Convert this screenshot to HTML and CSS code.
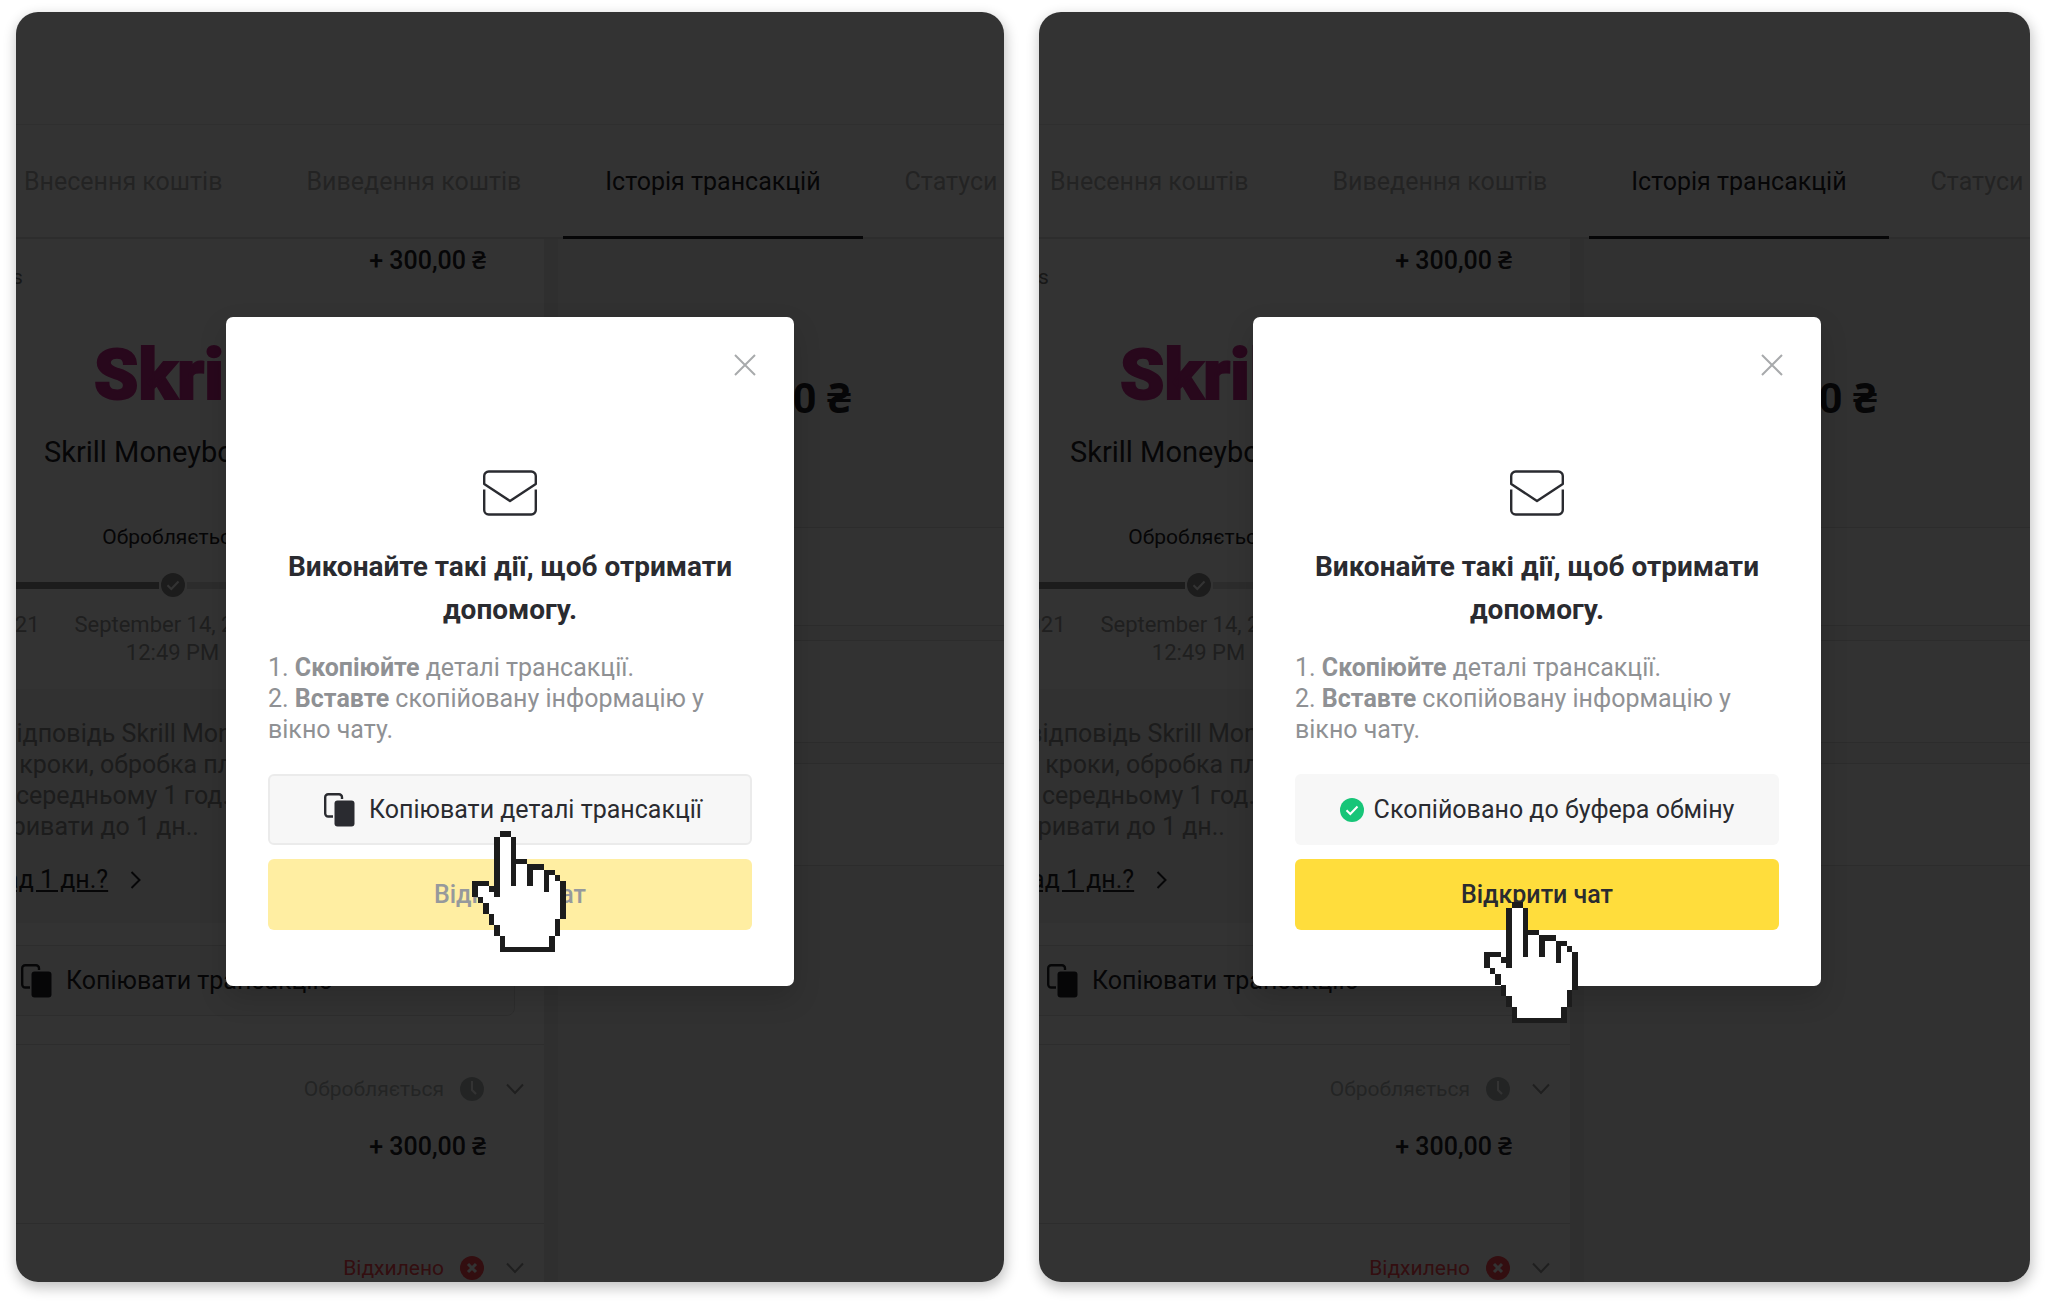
FILE: index.html
```
<!DOCTYPE html>
<html lang="uk">
<head>
    <meta charset="UTF-8">
    <meta name="viewport" content="width=device-width, initial-scale=1.0">
    <title>Історія трансакцій</title>
    <link rel="stylesheet" href="styles.css">
</head>
<body>
    <!-- shared icons -->
    <svg class="sprite" aria-hidden="true">
        <symbol id="icon-copy" viewBox="0 0 31 34">
            <path d="M9 23.500H4.200a3 3 0 0 1-3-3V4.200a3 3 0 0 1 3-3H15a3 3 0 0 1 3 3V6" fill="none" stroke="currentColor" stroke-width="2.400"/>
            <rect x="10.500" y="7.500" width="20" height="26" rx="3" fill="currentColor"/>
        </symbol>
        <symbol id="icon-check" viewBox="0 0 24 24">
            <circle cx="12" cy="12" r="12" fill="currentColor"/>
            <path d="M6.500 12.300l3.800 3.700 7.200-7.500" fill="none" stroke="#fff" stroke-width="2"/>
        </symbol>
        <symbol id="icon-clock" viewBox="0 0 24 24">
            <circle cx="12" cy="12" r="12" fill="currentColor"/>
            <path d="M12 4v9l4 4" fill="none" stroke="#fff" stroke-width="2"/>
        </symbol>
        <symbol id="icon-cross" viewBox="0 0 24 24">
            <circle cx="12" cy="12" r="12" fill="currentColor"/>
            <path d="M8 8l8 8M16 8l-8 8" stroke="#fff" stroke-width="3"/>
        </symbol>
        <symbol id="icon-down" viewBox="0 0 18 12">
            <path d="M1 1.500l8 8.500 8-8.500" fill="none" stroke="currentColor" stroke-width="2"/>
        </symbol>
        <symbol id="icon-right" viewBox="0 0 12 18">
            <path d="M1.500 1l8 8-8 8" fill="none" stroke="currentColor" stroke-width="2"/>
        </symbol>
        <symbol id="icon-close" viewBox="0 0 22 22">
            <path d="M1 1l20 20M21 1L1 21" stroke="currentColor" stroke-width="2"/>
        </symbol>
        <symbol id="icon-mail" viewBox="0 0 54 46">
            <path d="M1.200 14V6a4.500 4.500 0 0 1 4.500-4.500h42.600A4.500 4.500 0 0 1 52.800 6v8L27 31z" fill="none" stroke="currentColor" stroke-width="2.400" stroke-linejoin="round"/>
            <path d="M1.200 19.500V40a4.500 4.500 0 0 0 4.500 4.500h42.600A4.500 4.500 0 0 0 52.800 40V19.500" fill="none" stroke="currentColor" stroke-width="2.400"/>
        </symbol>
        <symbol id="icon-hand" viewBox="0 0 17 22" shape-rendering="crispEdges">
            <path fill="#fff" d="M5 1h2v5h3v1h3v1h2v1h1v7h-1v3h-1v2H6v-2H5v-2H4v-2H3v-2H2v-1H1v-2h2v1h2z"/>
            <path fill="#1c1c1c" d="M5 0h2v1H5zM4 1h1v11H4zM7 1h1v9H7zM8 5h2v1H8zM10 6h3v1h-2v3h-1zM13 7h2v1h-1v3h-1zM15 8h1v1h-1zM16 9h1v7h-1zM15 16h1v3h-1zM14 19h1v3H5v-3h1v2h8zM4 17h1v2H4zM3 15h1v2H3zM2 13h1v2H2zM1 12h1v1H1zM0 9h3v1H1v2H0zM3 10h1v1H3z"/>
        </symbol>
    </svg>

    <section class="panel">
        <div class="page">
            <div class="topbar"></div>
            <nav class="tabs">
                <a href="#">Внесення коштів</a>
                <a href="#">Виведення коштів</a>
                <a href="#" class="active">Історія трансакцій</a>
                <a href="#">Статуси</a>
            </nav>
            <div class="columns">
                <div class="history">
                    <div class="summary">
                        <span class="account">s</span>
                        <span class="amount">+ 300,00 ₴</span>
                    </div>
                    <div class="logo">Skrill</div>
                    <div class="method">Skrill Moneybookers</div>
                    <div class="steps">
                        <div class="step done">
                            <div class="label"></div>
                            <div class="track"><svg><use href="#icon-check"/></svg></div>
                            <div class="date">September 14, 2021</div>
                        </div>
                        <div class="step">
                            <div class="label">Обробляється</div>
                            <div class="track"><svg><use href="#icon-check"/></svg></div>
                            <div class="date">September 14, 2021<br>12:49 PM</div>
                        </div>
                    </div>
                    <div class="hint">
                        <p>на відповідь Skrill Moneybookers<br>такі кроки, обробка платежу<br>або середньому 1 год.<br>та тривати до 1 дн..</p>
                        <a href="#"><span>понад 1 дн.?</span> <svg><use href="#icon-right"/></svg></a>
                    </div>
                    <button class="copy"><svg><use href="#icon-copy"/></svg>Копіювати трансакцію</button>
                    <div class="row">
                        <div class="status">Обробляється <svg class="badge"><use href="#icon-clock"/></svg><svg class="arrow"><use href="#icon-down"/></svg></div>
                        <div class="amount">+ 300,00 ₴</div>
                    </div>
                    <div class="row">
                        <div class="status rejected">Відхилено <svg class="badge"><use href="#icon-cross"/></svg><svg class="arrow"><use href="#icon-down"/></svg></div>
                    </div>
                </div>
                <div class="details">
                    <div class="total">+ 300,00 ₴</div>
                    <div class="card short"></div>
                    <div class="card"></div>
                    <div class="card"></div>
                </div>
            </div>
        </div>
        <div class="overlay">
            <div class="modal">
                <button class="close" aria-label="Закрити"><svg><use href="#icon-close"/></svg></button>
                <svg class="mail"><use href="#icon-mail"/></svg>
                <h2>Виконайте такі дії, щоб отримати допомогу.</h2>
                <p>1. <b>Скопіюйте</b> деталі трансакції.</p>
                <p>2. <b>Вставте</b> скопійовану інформацію у вікно чату.</p>
                <button class="btn btn-copy"><svg><use href="#icon-copy"/></svg>Копіювати деталі трансакції</button>
                <button class="btn btn-chat" disabled>Відкрити чат</button>
                <svg class="hand"><use href="#icon-hand"/></svg>
            </div>
        </div>
    </section>

    <section class="panel copied">
        <div class="page">
            <div class="topbar"></div>
            <nav class="tabs">
                <a href="#">Внесення коштів</a>
                <a href="#">Виведення коштів</a>
                <a href="#" class="active">Історія трансакцій</a>
                <a href="#">Статуси</a>
            </nav>
            <div class="columns">
                <div class="history">
                    <div class="summary">
                        <span class="account">s</span>
                        <span class="amount">+ 300,00 ₴</span>
                    </div>
                    <div class="logo">Skrill</div>
                    <div class="method">Skrill Moneybookers</div>
                    <div class="steps">
                        <div class="step done">
                            <div class="label"></div>
                            <div class="track"><svg><use href="#icon-check"/></svg></div>
                            <div class="date">September 14, 2021</div>
                        </div>
                        <div class="step">
                            <div class="label">Обробляється</div>
                            <div class="track"><svg><use href="#icon-check"/></svg></div>
                            <div class="date">September 14, 2021<br>12:49 PM</div>
                        </div>
                    </div>
                    <div class="hint">
                        <p>на відповідь Skrill Moneybookers<br>такі кроки, обробка платежу<br>або середньому 1 год.<br>та тривати до 1 дн..</p>
                        <a href="#"><span>понад 1 дн.?</span> <svg><use href="#icon-right"/></svg></a>
                    </div>
                    <button class="copy"><svg><use href="#icon-copy"/></svg>Копіювати трансакцію</button>
                    <div class="row">
                        <div class="status">Обробляється <svg class="badge"><use href="#icon-clock"/></svg><svg class="arrow"><use href="#icon-down"/></svg></div>
                        <div class="amount">+ 300,00 ₴</div>
                    </div>
                    <div class="row">
                        <div class="status rejected">Відхилено <svg class="badge"><use href="#icon-cross"/></svg><svg class="arrow"><use href="#icon-down"/></svg></div>
                    </div>
                </div>
                <div class="details">
                    <div class="total">+ 300,00 ₴</div>
                    <div class="card short"></div>
                    <div class="card"></div>
                    <div class="card"></div>
                </div>
            </div>
        </div>
        <div class="overlay">
            <div class="modal">
                <button class="close" aria-label="Закрити"><svg><use href="#icon-close"/></svg></button>
                <svg class="mail"><use href="#icon-mail"/></svg>
                <h2>Виконайте такі дії, щоб отримати допомогу.</h2>
                <p>1. <b>Скопіюйте</b> деталі трансакції.</p>
                <p>2. <b>Вставте</b> скопійовану інформацію у вікно чату.</p>
                <button class="btn btn-done"><svg><use href="#icon-check"/></svg>Скопійовано до буфера обміну</button>
                <button class="btn btn-chat">Відкрити чат</button>
                <svg class="hand"><use href="#icon-hand"/></svg>
            </div>
        </div>
    </section>
</body>
</html>
```

FILE: styles.css
```
* {
    box-sizing: border-box;
}
body {
    margin: 0;
    height: 100vh;
    padding: 12px 18px 23px 16px;
    display: flex;
    gap: 35px;
    background-color: white;
    font-family: Roboto, "Noto Sans", sans-serif;
    font-size: 25px;
    line-height: 31px;
    color: #1e2226;
}
a {
    color: inherit;
    text-decoration: none;
}
button {
    font: inherit;
    color: inherit;
    cursor: pointer;
}
svg {
    display: block;
    flex: none;
}
.sprite {
    position: absolute;
    width: 0;
    height: 0;
}
.panel {
    position: relative;
    flex: 1;
    min-width: 0;
    overflow: hidden;
    border-radius: 22px;
    background-color: white;
    box-shadow: 1px 5px 13px 1px rgba(0, 0, 0, 0.24);
}
.copied {
    padding-left: 3px;
}

/* page under the overlay */
.page {
    margin-left: -54px;
}
.topbar {
    height: 113px;
    border-bottom: 1px solid #ebebeb;
}
.tabs {
    display: flex;
    height: 114px;
    padding-left: 20px;
    border-bottom: 2px solid #e1e1e1;
    color: #b0b0b0;
}
.tabs a {
    flex: none;
    height: 114px;
    padding: 0 42px;
    line-height: 114px;
}
.tabs .active {
    color: #1e2226;
    border-bottom: 3px solid #1e2226;
}
.columns {
    display: flex;
    background-color: #ebebeb;
    gap: 14px;
}
.history {
    width: 582px;
    flex: none;
    background-color: white;
}
.summary {
    display: flex;
    justify-content: space-between;
    padding: 0 58px 0 50px;
}
.account {
    margin-top: 24px;
    font-size: 21px;
    line-height: 28px;
    color: #777;
}
.amount {
    font-weight: 500;
    line-height: 44px;
}
.logo {
    margin: 48px 0 23px 132px;
    font-size: 71px;
    font-weight: 900;
    line-height: 72px;
    color: #c8288c;
    -webkit-text-stroke: 2px #c8288c;
}
.method {
    padding-left: 82px;
    font-size: 29px;
    line-height: 36px;
}
.steps {
    display: flex;
    margin-left: -136px;
    padding: 53px 0 22px;
    font-size: 21px;
    line-height: 28px;
    text-align: center;
}
.step {
    width: 231px;
    flex: none;
}
.label {
    height: 28px;
}
.track {
    display: flex;
    align-items: center;
    gap: 2px;
    margin: 22px 0 14px;
    color: #8c8c8c;
}
.track svg {
    width: 24px;
    height: 24px;
}
.track::before,
.track::after {
    content: "";
    flex: 1;
    height: 7px;
    background-color: #8c8c8c;
}
.step:last-child .track::after {
    background-color: #dcdcdc;
}
.date {
    font-size: 22px;
    color: #999;
}
.hint {
    padding: 29px 0 28px;
    background-color: #f4f4f4;
}
.hint p {
    margin: 0 0 22px;
    padding-left: 6px;
    color: #8c8c8c;
}
.hint a {
    display: flex;
    align-items: center;
    gap: 22px;
}
.hint a span {
    text-decoration: underline;
}
.hint a svg {
    width: 12px;
    height: 18px;
}
.copy {
    display: flex;
    align-items: center;
    gap: 14px;
    width: 553px;
    height: 71px;
    margin: 22px 0 28px;
    padding: 0 58px;
    border: 1px solid #e1e1e1;
    border-radius: 8px;
    background-color: #fafafa;
}
.copy svg,
.btn-copy svg {
    width: 31px;
    height: 34px;
}
.row {
    padding: 30px 20px 54px 0;
    border-top: 1px solid #e1e1e1;
    text-align: right;
}
.row .amount {
    margin-top: 22px;
    padding-right: 38px;
}
.status {
    display: flex;
    align-items: center;
    justify-content: flex-end;
    font-size: 21px;
    line-height: 28px;
    color: #b0b5b5;
}
.rejected {
    color: #ff4650;
}
.badge {
    width: 24px;
    height: 24px;
    margin: 0 22px 0 16px;
}
.arrow {
    width: 18px;
    height: 12px;
    color: #999;
}
.details {
    flex: 1;
    padding-top: 135px;
    background-color: #f4f4f4;
}
.total {
    margin-bottom: 103px;
    padding-right: 153px;
    font-size: 42px;
    font-weight: 700;
    line-height: 50px;
    text-align: right;
}
.card {
    height: 103px;
    margin-bottom: 20px;
    border-top: 1px solid #dcdcdc;
    border-bottom: 1px solid #dcdcdc;
    background-color: #fafafa;
}
.card.short {
    height: 99px;
    margin-bottom: 14px;
}

/* modal */
.overlay {
    position: absolute;
    inset: 0;
    display: flex;
    align-items: center;
    justify-content: center;
    padding-top: 9px;
    background-color: rgba(0, 0, 0, 0.8);
}
.copied .overlay {
    padding-left: 5px;
}
.modal {
    position: relative;
    width: 568px;
    padding: 153px 42px 56px;
    border-radius: 7px;
    background-color: white;
    box-shadow: 0 12px 28px rgba(0, 0, 0, 0.15);
    color: #2a2b30;
}
.close {
    position: absolute;
    top: 37px;
    right: 38px;
    padding: 0;
    border: 0;
    background: none;
    color: #a8aaac;
}
.close svg {
    width: 22px;
    height: 22px;
}
.mail {
    width: 54px;
    height: 46px;
    margin: 0 auto;
}
.modal h2 {
    margin: 29px 0 21px;
    font-size: 28px;
    font-weight: 700;
    line-height: 43px;
    text-align: center;
}
.modal p {
    margin: 0;
    color: #8f9194;
}
.modal b {
    font-weight: 700;
}
.btn {
    display: flex;
    align-items: center;
    justify-content: center;
    gap: 14px;
    width: 100%;
    height: 71px;
    border: 0;
    border-radius: 6px;
    background-color: #f7f7f7;
}
.btn-copy {
    margin: 29px 0 14px;
    padding-left: 12px;
    border: 2px solid #ebebeb;
}
.btn-done {
    gap: 10px;
    margin: 29px 0 14px;
}
.btn-done svg {
    width: 24px;
    height: 24px;
    color: #17c578;
}
.btn-chat {
    background-color: #ffdd3c;
    font-weight: 500;
}
.btn-chat:disabled {
    background-color: #ffeea2;
    color: #96999c;
    cursor: default;
}
.hand {
    position: absolute;
    left: 246px;
    top: 514px;
    width: 94px;
    height: 121px;
}
.copied .hand {
    left: 231px;
    top: 585px;
}
```
